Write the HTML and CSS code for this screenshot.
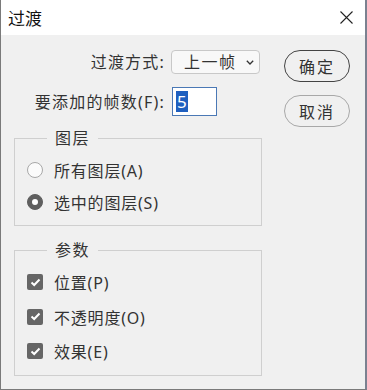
FILE: index.html
```html
<!DOCTYPE html>
<html lang="zh-CN">
<head>
<meta charset="utf-8">
<link rel="stylesheet" href="styles.css">
</head>
<body>
<div class="window">
  <header class="titlebar">
    <span class="title">过渡</span>
    <svg class="close" width="13" height="13" viewBox="0 0 13 13"><path d="M0.5 0.5L12.5 12.5M12.5 0.5L0.5 12.5" stroke="#222" stroke-width="1.1" fill="none"/></svg>
  </header>
  <div class="content">
    <div class="main">
      <div class="row row-mode">
        <span class="lbl">过渡方式:</span>
        <div class="select">
          <span class="select-text">上一帧</span>
          <svg class="chev" width="8" height="5" viewBox="0 0 8 5"><path d="M0.8 0.8L4 4L7.2 0.8" stroke="#333" stroke-width="1.3" fill="none"/></svg>
        </div>
      </div>
      <div class="row row-count">
        <span class="lbl">要添加的帧数(F):</span>
        <div class="input"><span class="selected">5</span></div>
      </div>
      <fieldset class="group group-layers">
        <legend>图层</legend>
        <div class="opt"><span class="radio"></span><span>所有图层(A)</span></div>
        <div class="opt"><span class="radio checked"></span><span>选中的图层(S)</span></div>
      </fieldset>
      <fieldset class="group group-params">
        <legend>参数</legend>
        <div class="opt opt-cb"><span class="cb"><svg width="11" height="9" viewBox="0 0 11 9"><path d="M1.5 4.5L4.2 7L9.5 1.5" stroke="#fff" stroke-width="2" fill="none"/></svg></span><span>位置(P)</span></div>
        <div class="opt opt-cb"><span class="cb"><svg width="11" height="9" viewBox="0 0 11 9"><path d="M1.5 4.5L4.2 7L9.5 1.5" stroke="#fff" stroke-width="2" fill="none"/></svg></span><span>不透明度(O)</span></div>
        <div class="opt opt-cb"><span class="cb"><svg width="11" height="9" viewBox="0 0 11 9"><path d="M1.5 4.5L4.2 7L9.5 1.5" stroke="#fff" stroke-width="2" fill="none"/></svg></span><span>效果(E)</span></div>
      </fieldset>
    </div>
    <div class="buttons">
      <div class="btn btn-ok">确定</div>
      <div class="btn btn-cancel">取消</div>
    </div>
  </div>
</div>
</body>
</html>
```

FILE: styles.css
```css
* { box-sizing: border-box; }
html, body { margin: 0; padding: 0; }
body {
  width: 367px;
  height: 390px;
  font-family: "Noto Sans", "Noto Sans CJK SC", sans-serif;
  color: #2b2b2b;
  background: #f0f0f0;
}
.window {
  width: 367px;
  height: 390px;
  border-left: 1px solid #7a7a7a;
  border-right: 2px solid #7b8190;
  border-bottom: 1px solid #7a7a7a;
  background: #f0f0f0;
  display: flex;
  flex-direction: column;
}
.titlebar {
  height: 35px;
  background: #ffffff;
  display: flex;
  align-items: center;
  justify-content: space-between;
  padding: 0 12px 0 7px;
  flex: none;
}
.title {
  font-size: 17px;
  color: #111;
  font-family: "Noto Sans CJK SC", sans-serif;
}
.content {
  display: flex;
  flex: 1;
}
.main {
  width: 267px;
  padding: 15px 0 0 13px;
}
.row {
  display: flex;
  align-items: center;
}
.lbl {
  width: 157px;
  text-align: right;
  font-size: 16px;
  line-height: 22px;
  padding-right: 6px;
  letter-spacing: 1.2px;
  color: #333;
}
.select {
  width: 89px;
  height: 24px;
  border: 1px solid #c8c8c8;
  border-radius: 4px;
  background: #f8f8f8;
  display: flex;
  align-items: center;
  padding: 0 5px 0 12px;
  font-size: 16px;
  letter-spacing: 1.5px;
  color: #333;
}
.select-text { flex: 1; line-height: 22px; }
.chev { flex: none; }
.row-count { margin-top: 13px; }
.input {
  width: 45px;
  height: 29px;
  border: 1px solid #4a78b5;
  background: #fff;
  padding: 3px 0 0 3px;
  margin-left: 1px;
}
.selected {
  display: inline-block;
  background: #1f5fbf;
  color: #fff;
  font-size: 17px;
  line-height: 21px;
  padding: 0 1px;
}
.group {
  margin: 0;
  padding: 0 0 0 12px;
  border: 1px solid #cfcfcf;
  width: 248px;
}
.group legend {
  margin-left: 20px;
  padding: 0 8px;
  font-size: 16px;
  line-height: 22px;
  letter-spacing: 1.5px;
  color: #333;
}
.group-layers { margin-top: 11px; height: 99px; padding-top: 5px; }
.group-params { margin-top: 13px; height: 137px; padding-top: 4px; }
.opt {
  display: flex;
  align-items: center;
  height: 32px;
  font-size: 16px;
  letter-spacing: 0.8px;
  color: #333;
}
.opt-cb { height: 34.5px; }
.radio {
  width: 16px;
  height: 16px;
  border-radius: 50%;
  border: 1px solid #a8a8a8;
  background: #fbfbfb;
  margin: 0 11px 0 0;
  flex: none;
}
.radio.checked {
  background: #5f5f5f;
  border-color: #5f5f5f;
  display: flex;
  align-items: center;
  justify-content: center;
}
.radio.checked::after {
  content: "";
  width: 6px;
  height: 6px;
  border-radius: 50%;
  background: #fff;
}
.cb {
  width: 16px;
  height: 16px;
  border-radius: 2px;
  background: #666;
  margin: 0 11px 0 0;
  display: flex;
  align-items: center;
  justify-content: center;
  flex: none;
}
.buttons {
  display: flex;
  flex-direction: column;
  gap: 13px;
  padding: 15px 0 0 16px;
}
.btn {
  width: 66px;
  height: 32px;
  border-radius: 16px;
  display: flex;
  align-items: center;
  justify-content: center;
  font-size: 16px;
  letter-spacing: 2px;
  color: #333;
  background: #f0f0f0;
}
.btn-ok { border: 1.5px solid #444; }
.btn-cancel { border: 1px solid #a8a8a8; }
```
